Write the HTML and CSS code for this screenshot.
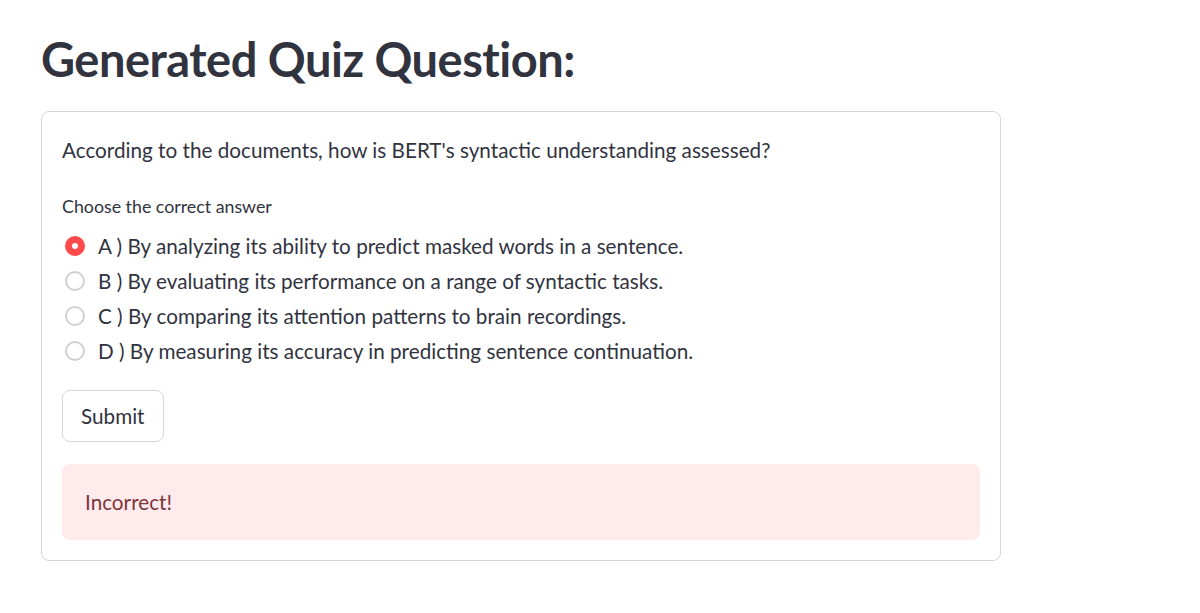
FILE: index.html
```html
<!DOCTYPE html>
<html lang="en">
<head>
<meta charset="utf-8">
<title>Quiz</title>
<link rel="stylesheet" href="styles.css">
</head>
<body>
<main class="main">
  <h1 class="title">Generated Quiz Question:</h1>
  <form class="form">
    <p class="question">According to the documents, how is BERT's syntactic understanding assessed?</p>
    <div class="label">Choose the correct answer</div>
    <div class="radios">
      <label class="option"><span class="dot checked"></span><span>A ) By analyzing its ability to predict masked words in a sentence.</span></label>
      <label class="option"><span class="dot"></span><span>B ) By evaluating its performance on a range of syntactic tasks.</span></label>
      <label class="option"><span class="dot"></span><span>C ) By comparing its attention patterns to brain recordings.</span></label>
      <label class="option"><span class="dot"></span><span>D ) By measuring its accuracy in predicting sentence continuation.</span></label>
    </div>
    <button type="button" class="btn">Submit</button>
    <div class="alert">Incorrect!</div>
  </form>
</main>
</body>
</html>
```
FILE: styles.css
```css
html, body {
  margin: 0;
  padding: 0;
  background: #ffffff;
}
body {
  font-family: "Lato", "Noto Sans", sans-serif;
  color: #31333f;
}
.main {
  width: 960px;
  padding: 29px 0 0 41px;
}
.title {
  margin: 0 0 22px 0;
  font-size: 47px;
  line-height: 60px;
  font-weight: 700;
  letter-spacing: -0.5px;
}
.form {
  box-sizing: border-box;
  width: 960px;
  border: 1px solid #d6d6d9;
  border-radius: 8px;
  padding: 24px 20px 20px 20px;
}
.question {
  margin: 0 0 30px 0;
  font-size: 20.7px;
  line-height: 28px;
}
.label {
  font-size: 17.8px;
  line-height: 24px;
  margin-bottom: 10px;
}
.radios {
  display: flex;
  flex-direction: column;
}
.option {
  display: flex;
  align-items: center;
  gap: 13px;
  height: 35px;
  font-size: 20.7px;
  padding-left: 3px;
}
.dot {
  box-sizing: border-box;
  width: 20px;
  height: 20px;
  border-radius: 50%;
  border: 2px solid #cfd0d3;
  background: #fff;
  flex: none;
}
.dot.checked {
  border: 7px solid #ff4b4b;
  background: #ffffff;
}
.btn {
  display: block;
  margin-top: 22px;
  font-family: inherit;
  font-size: 20.7px;
  color: #31333f;
  background: #fff;
  border: 1px solid #d6d6d9;
  border-radius: 8px;
  height: 52px;
  padding: 0 18px;
}
.alert {
  margin-top: 22px;
  background: #ffebeb;
  color: #7d353b;
  border-radius: 8px;
  height: 76px;
  display: flex;
  align-items: center;
  padding: 0 23px;
  font-size: 20.7px;
}
```
